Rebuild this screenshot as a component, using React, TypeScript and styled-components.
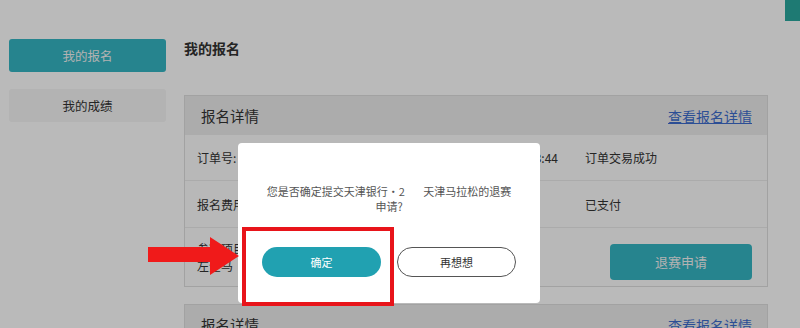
import styled, { createGlobalStyle } from 'styled-components';

const GlobalStyle = createGlobalStyle`
  * { box-sizing: border-box; }
  body {
    margin: 0;
    background: #ffffff;
    font-family: "Noto Sans CJK SC", "Noto Sans", sans-serif;
    color: #333;
    overflow: hidden;
  }
`;

type Row = {
    label: string;
    extra?: string;
    status?: string;
};

const rows: Row[] = [
    { label: '订单号:', extra: '下单时间: 2019-08-12 13:23:44', status: '订单交易成功' },
    { label: '报名费用', status: '已支付' },
];

function App() {
    return (
        <>
            <GlobalStyle />
            <Page>
                <Sidebar>
                    <SideItem active>我的报名</SideItem>
                    <SideItem>我的成绩</SideItem>
                </Sidebar>
                <Main>
                    <Title>我的报名</Title>
                    <Divider />

                    <Card>
                        <CardHeader>
                            <CardTitle>报名详情</CardTitle>
                            <DetailLink>查看报名详情</DetailLink>
                        </CardHeader>
                        <CardRow height={45}>
                            <LeftCell>
                                <Label>{rows[0].label}</Label>
                                <Label>{rows[0].extra}</Label>
                            </LeftCell>
                            <Status>{rows[0].status}</Status>
                        </CardRow>
                        <CardRow height={47} divided>
                            <LeftCell>
                                <Label>{rows[1].label}</Label>
                            </LeftCell>
                            <Status>{rows[1].status}</Status>
                        </CardRow>
                        <CardRow height={59} divided>
                            <Stack>
                                <Label>参赛项目二</Label>
                                <Label>左全马</Label>
                            </Stack>
                            <ActionCell>
                                <RefundButton>退赛申请</RefundButton>
                            </ActionCell>
                        </CardRow>
                    </Card>

                    <Card>
                        <CardHeader>
                            <CardTitle>报名详情</CardTitle>
                            <DetailLink>查看报名详情</DetailLink>
                        </CardHeader>
                    </Card>
                </Main>
                <CornerTab />
            </Page>

            <Overlay />

            <Modal>
                <Message>
                    您是否确定提交天津银行·2<Hidden>019</Hidden>天津马拉松的退赛
                    <br />
                    申请?
                </Message>
                <ButtonRow>
                    <ConfirmButton>确定</ConfirmButton>
                    <CancelButton>再想想</CancelButton>
                </ButtonRow>
            </Modal>

            {/* annotation drawn over the screenshot */}
            <HighlightBox />
            <Arrow width="96" height="40" viewBox="0 0 96 40">
                <polygon points="2,11 64,11 64,1 93,20 64,39 64,26 2,26" fill="#f01a1a" />
            </Arrow>
        </>
    );
}

const Page = styled.div`
  display: flex;
  gap: 18px;
  padding: 39px 0 0 9px;
  height: 328px;
`;

const Sidebar = styled.div`
  display: flex;
  flex-direction: column;
  gap: 17px;
  width: 157px;
  flex-shrink: 0;
`;

const SideItem = styled.div<{ active?: boolean }>`
  height: 33px;
  display: flex;
  align-items: center;
  justify-content: center;
  border-radius: 3px;
  font-size: 12.5px;
  background: ${p => (p.active ? '#35b5c3' : '#f6f6f6')};
  color: ${p => (p.active ? '#f4f4f4' : '#333')};
`;

const Main = styled.div`
  width: 584px;
  display: flex;
  flex-direction: column;
`;

const Title = styled.div`
  font-size: 14px;
  font-weight: 700;
  line-height: 18px;
  height: 18px;
`;

const Divider = styled.div`
  margin-top: 9px;
  height: 2px;
  background: repeating-linear-gradient(90deg, #8a8a8a 0 6px, transparent 6px 10px);
`;

const Card = styled.div`
  margin-top: 29px;
  border: 1px solid #dedede;
  background: #fdfdfd;

  & + & {
    margin-top: 17px;
  }
`;

const CardHeader = styled.div`
  height: 39px;
  display: flex;
  align-items: center;
  justify-content: space-between;
  padding: 0 15px 0 16px;
  background: #ececec;
`;

const CardTitle = styled.div`
  font-size: 14.5px;
  color: #333;
`;

const DetailLink = styled.a`
  font-size: 14px;
  color: #3d6ccc;
  text-decoration: underline;
  cursor: pointer;
`;

const CardRow = styled.div<{ height: number; divided?: boolean }>`
  height: ${p => p.height}px;
  display: grid;
  grid-template-columns: 1fr 167px;
  column-gap: 27px;
  align-items: center;
  padding: 0 15px 0 12px;
  border-top: ${p => (p.divided ? '1px solid #ebebeb' : 'none')};
`;

const LeftCell = styled.div`
  display: flex;
  justify-content: space-between;
  align-items: center;
`;

const Stack = styled.div`
  display: flex;
  flex-direction: column;
`;

const Label = styled.div`
  font-size: 12px;
  line-height: 17px;
  color: #333;
  white-space: nowrap;
`;

const Status = styled.div`
  font-size: 12px;
  color: #333;
`;

const ActionCell = styled.div`
  display: flex;
  justify-content: flex-end;
  padding-top: 9px;
`;

const RefundButton = styled.button`
  width: 142px;
  height: 36px;
  border: none;
  border-radius: 4px;
  background: #35b5c3;
  color: #f4f4f4;
  font-family: inherit;
  font-size: 13px;
`;

const CornerTab = styled.div`
  position: absolute;
  top: 0;
  right: 0;
  width: 15px;
  height: 21px;
  background: #2aa89e;
`;

const Overlay = styled.div`
  position: fixed;
  inset: 0;
  background: rgba(0, 0, 0, 0.27);
`;

const Modal = styled.div`
  position: absolute;
  left: 238px;
  top: 143px;
  width: 302px;
  height: 160px;
  background: #ffffff;
  border-radius: 4px;
  padding-top: 41px;
  display: flex;
  flex-direction: column;
  align-items: center;
`;

const Message = styled.div`
  font-size: 11px;
  line-height: 15px;
  color: #555;
  text-align: center;
`;

const Hidden = styled.span`
  color: #ffffff;
`;

const ButtonRow = styled.div`
  display: flex;
  gap: 16px;
  margin-top: 33px;
`;

const PillButton = styled.button`
  width: 119px;
  height: 30px;
  border-radius: 15px;
  font-family: inherit;
  font-size: 11px;
`;

const ConfirmButton = styled(PillButton)`
  border: none;
  background: #21a1b1;
  color: #ffffff;
`;

const CancelButton = styled(PillButton)`
  border: 1px solid #555;
  background: #ffffff;
  color: #333;
`;

const HighlightBox = styled.div`
  position: absolute;
  left: 242px;
  top: 227px;
  width: 152px;
  height: 79px;
  border: 4px solid #e8141a;
`;

const Arrow = styled.svg`
  position: absolute;
  left: 146px;
  top: 236px;
`;

export default App;
